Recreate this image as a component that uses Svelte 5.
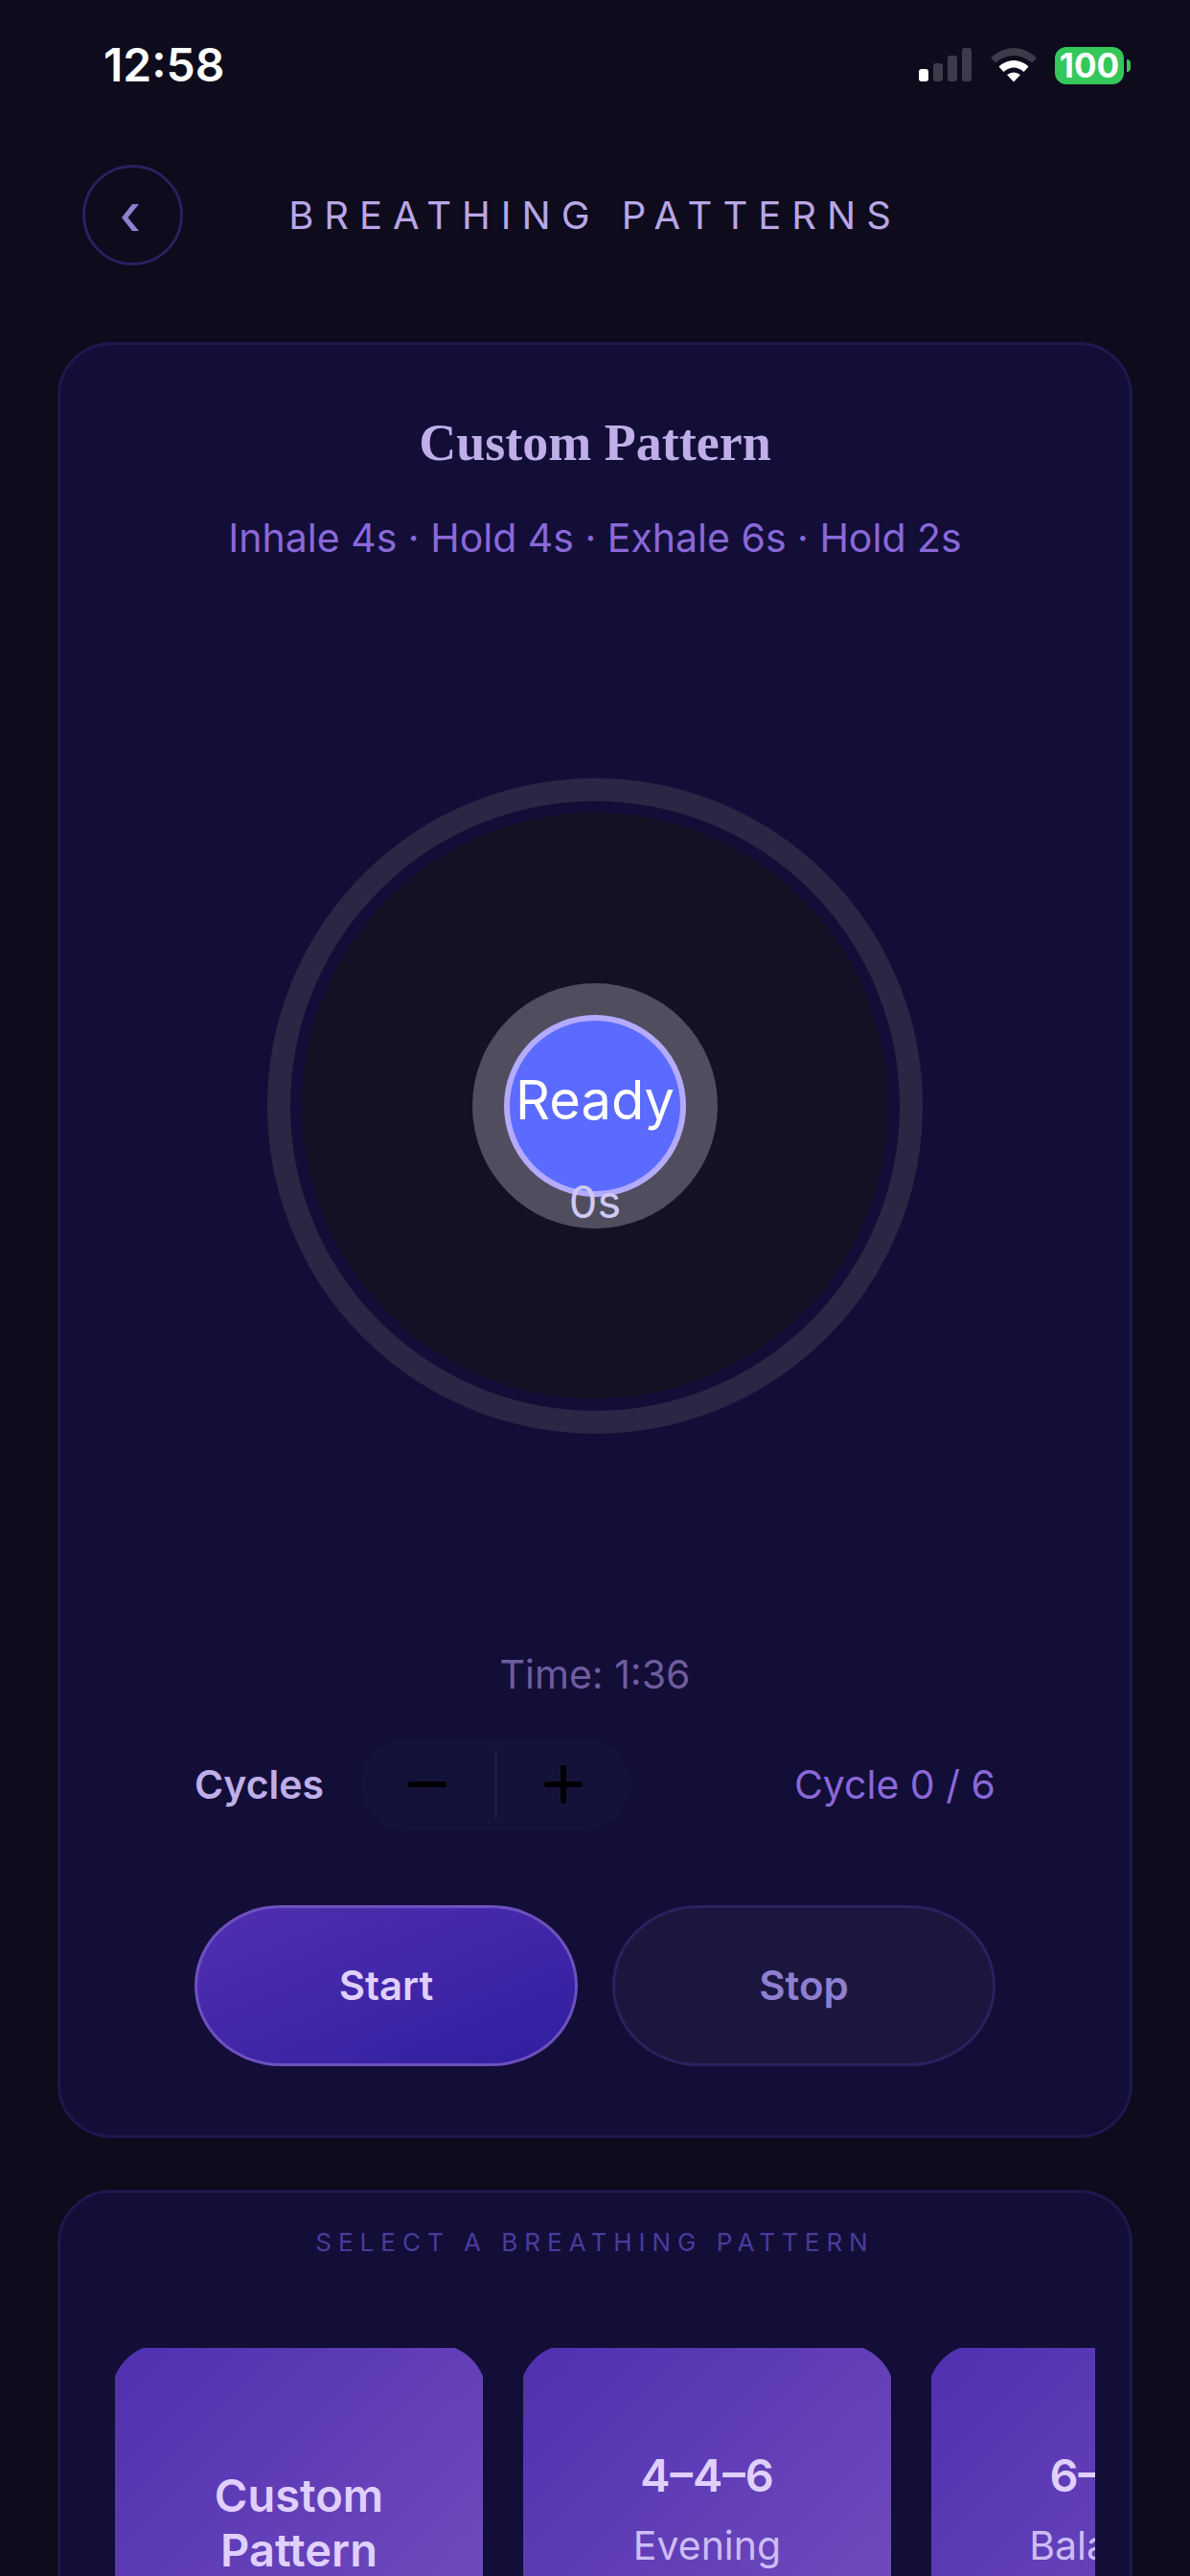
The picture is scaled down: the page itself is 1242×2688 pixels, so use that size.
<script lang="ts">
  const patterns = [
    { name: 'Custom Pattern', note: '' },
    { name: '4–4–6', note: 'Evening Calm' },
    { name: '6–6–6', note: 'Balanced Calm' },
  ];

  let cycle = $state(0);
  let cycles = $state(6);
  let phase = $state('Ready');

  const cycleSeconds = 16;
  let total = $derived(cycles * cycleSeconds);
  let time = $derived(`${Math.floor(total / 60)}:${String(total % 60).padStart(2, '0')}`);
</script>

<div class="screen">
  <div class="status">
    <span class="clock">12:58</span>
    <div class="indicators">
      <svg width="56" height="36" viewBox="0 0 56 36" aria-hidden="true">
        <rect x="0" y="22" width="10" height="13" rx="3" fill="#fff" />
        <rect x="15" y="16" width="10" height="19" rx="3" fill="#3d3b4a" />
        <rect x="30" y="8" width="10" height="27" rx="3" fill="#3d3b4a" />
        <rect x="45" y="0" width="10" height="35" rx="3" fill="#3d3b4a" />
      </svg>
      <svg width="48" height="36" viewBox="0 0 48 36" aria-hidden="true">
        <path d="M0 10.5Q10.500 0 24 0T48 10.500L43 15.500Q34 8 24 8T5 15.500Z" fill="#3d3b4a" />
        <path d="M8.500 19.500Q15.500 13 24 13T39.500 19.500L34.500 25Q29.500 20.500 24 20.500T13.500 25Z" fill="#fff" />
        <path d="M17 28Q24 23 31 28L24 35.500Z" fill="#fff" />
      </svg>
      <div class="battery"><span>100</span></div>
    </div>
  </div>

  <header>
    <button class="back" aria-label="Back">
      <svg width="24" height="32" viewBox="0 -4 24 32" aria-hidden="true">
        <path d="M11 0H18L6.500 14L18 28H11L0 14Z" fill="#917fd3" />
      </svg>
    </button>
    <h1>BREATHING PATTERNS</h1>
  </header>

  <main>
    <section class="card player">
      <h2>Custom Pattern</h2>
      <p class="steps">Inhale 4s · Hold 4s · Exhale 6s · Hold 2s</p>

      <div class="dial">
        <svg viewBox="0 0 684 684" aria-hidden="true">
          <circle cx="342" cy="342" r="330" fill="none" stroke="#2a2744" stroke-width="24" />
          <circle cx="342" cy="342" r="306" fill="#131225" />
          <circle cx="342" cy="342" r="128" fill="#504d5e" />
          <circle cx="342" cy="342" r="92" fill="#5b6bff" stroke="#b4abff" stroke-width="6" />
        </svg>
        <div class="readout">
          <span class="phase">{phase}</span>
          <span class="seconds">0s</span>
        </div>
      </div>

      <p class="time">Time: {time}</p>

      <div class="cycles">
        <span class="label">Cycles</span>
        <div class="stepper">
          <button aria-label="Fewer cycles" onclick={() => cycles = Math.max(1, cycles - 1)}>
            <svg width="40" height="40" viewBox="0 0 40 40" aria-hidden="true">
              <path d="M3 20H37" />
            </svg>
          </button>
          <button aria-label="More cycles" onclick={() => cycles += 1}>
            <svg width="40" height="40" viewBox="0 0 40 40" aria-hidden="true">
              <path d="M3 20H37M20 3V37" />
            </svg>
          </button>
        </div>
        <span class="count">Cycle {cycle} / {cycles}</span>
      </div>

      <div class="actions">
        <button class="start" onclick={() => phase = 'Inhale'}>Start</button>
        <button class="stop" onclick={() => phase = 'Ready'}>Stop</button>
      </div>
    </section>

    <section class="card picker">
      <h3>SELECT A BREATHING PATTERN</h3>
      <div class="scroller">
        {#each patterns as p}
          <button class="tile">
            <span class="name">{p.name}</span>
            <span class="note">{p.note}</span>
          </button>
        {/each}
      </div>
    </section>
  </main>
</div>

<style>
  :global(body) {
    background: #0d0b1c;
  }

  .screen {
    height: 100vh;
    overflow: hidden;
    background: #0d0b1c;
    font-family: Inter, 'Liberation Sans', sans-serif;
    font-size: 41px;
    line-height: 50px;
  }

  button {
    font: inherit;
    padding: 0;
    border: none;
    background: none;
    cursor: pointer;
  }

  svg {
    display: block;
  }

  h1, h2, h3, p {
    margin: 0;
    font-weight: 400;
  }

  .status {
    display: flex;
    justify-content: space-between;
    align-items: center;
    height: 136px;
    padding: 0 62px 0 108px;
  }

  .clock {
    color: #fff;
    font-size: 48px;
    font-weight: 600;
  }

  .indicators {
    display: flex;
    align-items: center;
    gap: 19px;
  }

  .battery {
    position: relative;
    width: 72px;
    height: 39px;
    margin-right: 7px;
    border-radius: 12px;
    background: #34c759;
    color: #fff;
    font-size: 35px;
    font-weight: 700;
    line-height: 39px;
    text-align: center;
  }

  .battery::after {
    content: '';
    position: absolute;
    top: 13px;
    right: -7px;
    width: 4px;
    height: 13px;
    border-radius: 0 4px 4px 0;
    background: #34c759;
  }

  header {
    display: grid;
    grid-template-columns: 105px 1fr 105px;
    align-items: center;
    padding: 36px 86px 80px;
  }

  .back {
    display: flex;
    align-items: center;
    justify-content: center;
    height: 105px;
    border: 3px solid #2a2060;
    border-radius: 50%;
  }

  h1 {
    color: #b9a6e6;
    font-size: 40px;
    letter-spacing: 11px;
    text-align: center;
  }

  main {
    display: flex;
    flex-direction: column;
    gap: 54px;
    padding: 0 60px;
  }

  .card {
    border: 3px solid #1e184e;
    border-radius: 56px;
    background: #120e38;
  }

  .player {
    display: flex;
    flex-direction: column;
    align-items: center;
    padding: 72px 140px;
  }

  h2 {
    color: #bfaee8;
    font-family: 'Liberation Serif', serif;
    font-size: 54px;
    font-weight: 700;
    line-height: 60px;
  }

  .steps {
    margin-top: 44px;
    color: #8a68d8;
  }

  .dial {
    display: grid;
    width: 684px;
    margin: 226px 0;
  }

  .dial > * {
    grid-area: 1 / 1;
  }

  .readout {
    display: flex;
    flex-direction: column;
    align-items: center;
    gap: 45px;
    padding-top: 300px;
  }

  .phase {
    color: #fff;
    font-size: 56px;
    line-height: 72px;
  }

  .seconds {
    color: #cfc8f8;
    font-size: 47px;
  }

  .time {
    color: #6f5c9e;
  }

  .cycles {
    display: flex;
    align-items: center;
    align-self: stretch;
    margin-top: 42px;
  }

  .label {
    color: #bfaee8;
    font-weight: 600;
  }

  .stepper {
    display: flex;
    align-items: center;
    width: 282px;
    height: 96px;
    margin-left: 38px;
    border-radius: 48px;
    background: #151239;
  }

  .stepper button {
    display: flex;
    flex: 1;
    align-items: center;
    justify-content: center;
    height: 72px;
  }

  .stepper button + button {
    border-left: 3px solid #1f1c3c;
  }

  .stepper path {
    fill: none;
    stroke: #000;
    stroke-width: 6;
    stroke-linecap: round;
  }

  .count {
    margin-left: auto;
    color: #8a68d8;
  }

  .actions {
    display: grid;
    grid-template-columns: 1fr 1fr;
    gap: 36px;
    align-self: stretch;
    margin-top: 78px;
  }

  .actions button {
    height: 168px;
    border: 3px solid #2a225e;
    border-radius: 90px / 84px;
    font-size: 42px;
    font-weight: 600;
  }

  .actions .start {
    border-color: #6f50be;
    background: linear-gradient(to bottom right, #512fb0, #301ea0);
    color: #e0d0ff;
  }

  .actions .stop {
    background: #1b163e;
    color: #8f7fd0;
  }

  .picker {
    padding: 27px 36px 60px;
  }

  h3 {
    color: #4b3b9c;
    font-size: 26px;
    letter-spacing: 7px;
    text-align: center;
  }

  .scroller {
    display: flex;
    gap: 42px;
    margin-top: 85px;
    padding-left: 21px;
    overflow: hidden;
  }

  .tile {
    position: relative;
    display: flex;
    flex: none;
    flex-direction: column;
    align-items: center;
    justify-content: center;
    gap: 20px;
    width: 384px;
    height: 384px;
    overflow: hidden;
    isolation: isolate;
  }

  /* slightly larger than the tile, so its rounded edge is trimmed */
  .tile::before {
    content: '';
    position: absolute;
    inset: -4px;
    z-index: -1;
    border-radius: 54px;
    background: linear-gradient(to bottom right, #5030b0, #7650c0);
  }

  .name {
    width: 200px;
    color: #e0d0ff;
    font-size: 47px;
    font-weight: 600;
    line-height: 57px;
  }

  .note {
    width: 200px;
    color: #cdbcf4;
  }
</style>
